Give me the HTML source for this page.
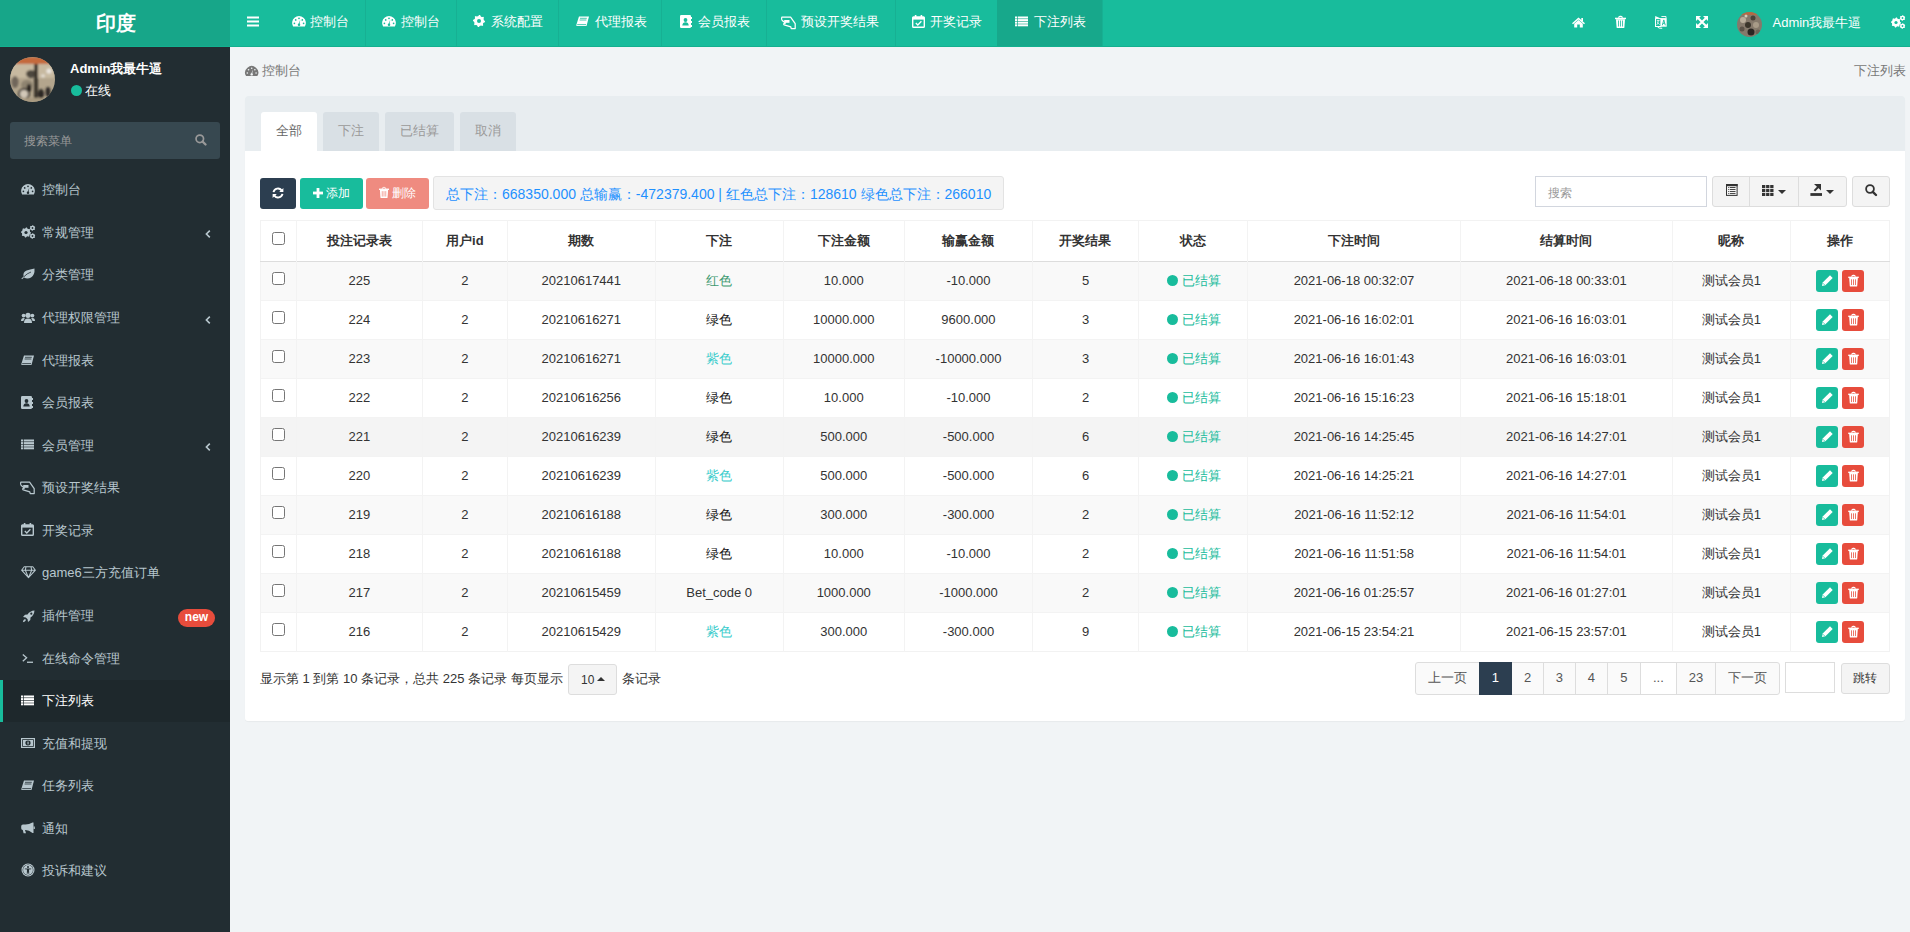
<!DOCTYPE html>
<html><head><meta charset="utf-8"><style>
*{box-sizing:border-box;margin:0;padding:0}
html,body{width:1910px;height:932px;overflow:hidden}
body{font-family:"Liberation Sans",sans-serif;font-size:13px;color:#333;background:#f1f4f6;position:relative}
.tx{position:absolute;white-space:nowrap}
svg{display:block;overflow:visible}
.bx{position:absolute}
</style></head><body>
<div class="bx" style="left:0;top:0;width:230px;height:46px;background:#17a689"></div>
<div class="tx" style="left:96px;top:10.00px;font-size:20px;line-height:26px;color:#fff;font-weight:bold;">印度</div>
<div class="bx" style="left:230px;top:0;width:1680px;height:46px;background:#18bc9c"></div>
<div class="bx" style="left:0;top:46px;width:1910px;height:1px;background:#13b08f"></div>
<div class="bx" style="left:997px;top:0;width:105px;height:46px;background:#17a88b"></div>
<div class="bx" style="left:364.5px;top:0;width:1px;height:46px;background:#17b093"></div>
<div class="bx" style="left:455.5px;top:0;width:1px;height:46px;background:#17b093"></div>
<div class="bx" style="left:558.3px;top:0;width:1px;height:46px;background:#17b093"></div>
<div class="bx" style="left:661.2px;top:0;width:1px;height:46px;background:#17b093"></div>
<div class="bx" style="left:765.5px;top:0;width:1px;height:46px;background:#17b093"></div>
<div class="bx" style="left:894.7px;top:0;width:1px;height:46px;background:#17b093"></div>
<div class="bx" style="left:1101.5px;top:0;width:1px;height:46px;background:#17b093"></div>
<svg style="position:absolute;left:247px;top:16px" width="12" height="11" viewBox="0 0 12 11" fill="#fff" ><rect x="0" y="0.5" width="12" height="2"/><rect x="0" y="4.5" width="12" height="2"/><rect x="0" y="8.5" width="12" height="2"/></svg>
<svg style="position:absolute;left:291.8px;top:16.3px" width="14" height="11" viewBox="0 0 14 11" fill="#fff" ><path d="M1.1 10.6 A6.9 6.9 0 1 1 12.9 10.6 Z"/><circle cx="7" cy="2.3" r="0.85" fill="#18bc9c"/><circle cx="3.7" cy="3.9" r="0.85" fill="#18bc9c"/><circle cx="10.3" cy="3.9" r="0.85" fill="#18bc9c"/><circle cx="2.4" cy="7.3" r="0.85" fill="#18bc9c"/><circle cx="11.6" cy="7.3" r="0.85" fill="#18bc9c"/><path d="M8.3 3.6 L6.5 8.2 L7.5 8.5 Z" fill="#18bc9c"/><circle cx="7" cy="8.8" r="1.25" fill="#18bc9c"/></svg>
<div class="tx" style="left:310.2px;top:12.00px;font-size:13px;line-height:20px;color:#fff;">控制台</div>
<svg style="position:absolute;left:382px;top:16.3px" width="14" height="11" viewBox="0 0 14 11" fill="#fff" ><path d="M1.1 10.6 A6.9 6.9 0 1 1 12.9 10.6 Z"/><circle cx="7" cy="2.3" r="0.85" fill="#18bc9c"/><circle cx="3.7" cy="3.9" r="0.85" fill="#18bc9c"/><circle cx="10.3" cy="3.9" r="0.85" fill="#18bc9c"/><circle cx="2.4" cy="7.3" r="0.85" fill="#18bc9c"/><circle cx="11.6" cy="7.3" r="0.85" fill="#18bc9c"/><path d="M8.3 3.6 L6.5 8.2 L7.5 8.5 Z" fill="#18bc9c"/><circle cx="7" cy="8.8" r="1.25" fill="#18bc9c"/></svg>
<div class="tx" style="left:400.6px;top:12.00px;font-size:13px;line-height:20px;color:#fff;">控制台</div>
<svg style="position:absolute;left:473.3px;top:15px" width="12" height="12" viewBox="0 0 12 12" fill="#fff" ><path d="M6.00,0.00 L7.17,0.12 L7.76,1.75 L8.56,2.18 L10.24,1.76 L10.99,2.67 L10.25,4.24 L10.51,5.10 L12.00,6.00 L11.88,7.17 L10.25,7.76 L9.82,8.56 L10.24,10.24 L9.33,10.99 L7.76,10.25 L6.90,10.51 L6.00,12.00 L4.83,11.88 L4.24,10.25 L3.44,9.82 L1.76,10.24 L1.01,9.33 L1.75,7.76 L1.49,6.90 L0.00,6.00 L0.12,4.83 L1.75,4.24 L2.18,3.44 L1.76,1.76 L2.67,1.01 L4.24,1.75 L5.10,1.49 Z"/><circle cx="6" cy="6" r="4.8"/><circle cx="6" cy="6" r="2" fill="#18bc9c"/></svg>
<div class="tx" style="left:491px;top:12.00px;font-size:13px;line-height:20px;color:#fff;">系统配置</div>
<svg style="position:absolute;left:576px;top:16px" width="13" height="11" viewBox="0 0 13 11" fill="#fff" ><path d="M3 0.5 L13 0.5 L10.5 10 L1 10 Q0 10 0.3 9 Z"/><path d="M4 2.3 L10.8 2.3 M3.6 4 L10.4 4" stroke="#18bc9c" stroke-width="0.8" fill="none"/><path d="M1.2 8.6 L10 8.6" stroke="#18bc9c" stroke-width="0.8" fill="none"/></svg>
<div class="tx" style="left:594.5px;top:12.00px;font-size:13px;line-height:20px;color:#fff;">代理报表</div>
<svg style="position:absolute;left:680px;top:15px" width="12" height="13" viewBox="0 0 12 13" fill="#fff" ><rect x="0" y="0" width="11" height="13" rx="1.2"/><circle cx="5.5" cy="5" r="1.9" fill="#18bc9c"/><path d="M2.3 10.5 Q2.6 7.3 5.5 7.3 Q8.4 7.3 8.7 10.5 Z" fill="#18bc9c"/><rect x="10.5" y="2" width="1.5" height="2"/><rect x="10.5" y="6" width="1.5" height="2"/><rect x="10.5" y="10" width="1.5" height="2"/></svg>
<div class="tx" style="left:697.5px;top:12.00px;font-size:13px;line-height:20px;color:#fff;">会员报表</div>
<svg style="position:absolute;left:781px;top:15.5px" width="15" height="14" viewBox="0 0 15 14" fill="#fff" ><path d="M0.8 1.1 L9.6 1.1 L14.2 7.6 L14.2 12.6 L10.2 12.6 L9.8 10.9 L3.2 8.9 Q2.4 8.5 2.9 7.7 L4.4 7.1 L1.2 4.6 Q0.1 3.6 0.8 1.1 Z" fill="none" stroke="#fff" stroke-width="1.25" stroke-linejoin="round"/><rect x="3.2" y="4" width="5.3" height="2.8"/></svg>
<div class="tx" style="left:801px;top:12.00px;font-size:13px;line-height:20px;color:#fff;">预设开奖结果</div>
<svg style="position:absolute;left:911.7px;top:15px" width="13" height="13" viewBox="0 0 13 13" fill="#fff" ><rect x="0.7" y="2" width="11.6" height="10.3" rx="0.8" fill="none" stroke="#fff" stroke-width="1.4"/><rect x="0.7" y="2" width="11.6" height="2.6"/><rect x="2.8" y="0" width="1.6" height="3"/><rect x="8.6" y="0" width="1.6" height="3"/><path d="M3.8 8 L5.8 10 L9.4 6.2" fill="none" stroke="#fff" stroke-width="1.3"/></svg>
<div class="tx" style="left:929.5px;top:12.00px;font-size:13px;line-height:20px;color:#fff;">开奖记录</div>
<svg style="position:absolute;left:1015px;top:16px" width="13" height="11" viewBox="0 0 13 11" fill="#fff" ><rect x="0" y="0.5" width="2.3" height="2"/><rect x="3" y="0.5" width="10" height="2"/><rect x="0" y="3.1" width="2.3" height="2"/><rect x="3" y="3.1" width="10" height="2"/><rect x="0" y="5.7" width="2.3" height="2"/><rect x="3" y="5.7" width="10" height="2"/><rect x="0" y="8.3" width="2.3" height="2"/><rect x="3" y="8.3" width="10" height="2"/></svg>
<div class="tx" style="left:1034px;top:12.00px;font-size:13px;line-height:20px;color:#fff;">下注列表</div>
<svg style="position:absolute;left:1572px;top:16.5px" width="13" height="11" viewBox="0 0 13 11" fill="#fff" ><path d="M6.5 0.5 L13 6.3 L12 7.3 L6.5 2.5 L1 7.3 L0 6.3 Z"/><path d="M2.2 6.7 L6.5 3 L10.8 6.7 L10.8 10.5 L7.8 10.5 L7.8 7.6 L5.2 7.6 L5.2 10.5 L2.2 10.5 Z"/><rect x="9.3" y="1" width="1.7" height="3"/></svg>
<svg style="position:absolute;left:1615px;top:16.3px" width="11" height="12" viewBox="0 0 11 12" fill="#fff" ><path d="M3.6 1.8 Q3.8 0.4 5 0.4 L6 0.4 Q7.2 0.4 7.4 1.8" fill="none" stroke="#fff" stroke-width="1.1"/><rect x="0" y="1.7" width="11" height="1.5"/><path d="M1 3.2 L10 3.2 L9.4 11.4 Q9.3 12 8.6 12 L2.4 12 Q1.7 12 1.6 11.4 Z"/><rect x="3.1" y="4.5" width="0.8" height="6" fill="#18bc9c"/><rect x="5.1" y="4.5" width="0.8" height="6" fill="#18bc9c"/><rect x="7.1" y="4.5" width="0.8" height="6" fill="#18bc9c"/></svg>
<svg style="position:absolute;left:1655px;top:16px" width="12" height="13" viewBox="0 0 12 13" fill="#fff" ><rect x="0.5" y="2.6" width="5.4" height="7.9" fill="none" stroke="#fff" stroke-width="1"/><path d="M0.2 0 L5.9 2.4 L0.2 2.4 Z"/><rect x="5.9" y="2.1" width="5.8" height="8.6"/><path d="M6.4 0.5 L11 0.5 L11 2.1" fill="none" stroke="#fff" stroke-width="0.9"/><path d="M7.3 9.3 L8.8 3.9 L10.3 9.3 M7.9 7.4 L9.7 7.4" fill="none" stroke="#18bc9c" stroke-width="0.9"/><path d="M1.8 4.6 L4.6 4.6 M3.2 4.6 Q3.2 7.6 1.8 8.8 M2.6 6.4 Q3.6 8 4.6 8.6" fill="none" stroke="#fff" stroke-width="0.8"/><path d="M2.4 10.8 Q3.4 12.6 7.2 12.3" fill="none" stroke="#fff" stroke-width="1"/></svg>
<svg style="position:absolute;left:1696px;top:16px" width="12" height="12" viewBox="0 0 12 12" fill="#fff" ><path d="M0 0 L5 0 L0 5 Z"/><path d="M12 0 L7 0 L12 5 Z"/><path d="M0 12 L5 12 L0 7 Z"/><path d="M12 12 L7 12 L12 7 Z"/><path d="M1.5 1.5 L10.5 10.5 M10.5 1.5 L1.5 10.5" stroke="#fff" stroke-width="2.1" fill="none"/></svg>
<svg style="position:absolute;left:1737px;top:12px" width="25" height="25" viewBox="0 0 25 25"><defs><clipPath id="ch"><circle cx="12.5" cy="12.5" r="12.5"/></clipPath><filter id="fh" x="-10%" y="-10%" width="120%" height="120%"><feGaussianBlur stdDeviation="0.7"/></filter></defs><g clip-path="url(#ch)"><rect width="25" height="25" fill="#85796b"/><g filter="url(#fh)"><rect width="25" height="3" fill="#b26a45"/><circle cx="6" cy="8" r="3" fill="#b9ad9a"/><circle cx="16" cy="6" r="2.5" fill="#4a4238"/><circle cx="11" cy="13" r="3" fill="#3b342c"/><circle cx="19" cy="13" r="3" fill="#a89b88"/><circle cx="5" cy="17" r="2.5" fill="#5c5348"/><circle cx="14" cy="20" r="3.5" fill="#2c2722"/><circle cx="21" cy="20" r="2.5" fill="#6d6356"/><circle cx="9" cy="4" r="1.5" fill="#d6cbb8"/></g></g></svg>
<div class="tx" style="left:1772.5px;top:12.50px;font-size:13px;line-height:20px;color:#fff;">Admin我最牛逼</div>
<svg style="position:absolute;left:1891px;top:15px" width="15" height="14" viewBox="0 0 15 14" fill="#fff" ><path d="M5.00,2.50 L5.98,2.60 L6.49,3.90 L7.17,4.26 L8.54,3.96 L9.16,4.72 L8.60,6.01 L8.83,6.74 L10.00,7.50 L9.90,8.48 L8.60,8.99 L8.24,9.67 L8.54,11.04 L7.78,11.66 L6.49,11.10 L5.76,11.33 L5.00,12.50 L4.02,12.40 L3.51,11.10 L2.83,10.74 L1.46,11.04 L0.84,10.28 L1.40,8.99 L1.17,8.26 L0.00,7.50 L0.10,6.52 L1.40,6.01 L1.76,5.33 L1.46,3.96 L2.22,3.34 L3.51,3.90 L4.24,3.67 Z"/><circle cx="5" cy="7.5" r="4"/><circle cx="5" cy="7.5" r="1.6" fill="#18bc9c"/><path d="M11.50,0.20 L12.22,0.30 L12.55,1.18 L12.98,1.52 L13.92,1.60 L14.20,2.28 L13.60,3.00 L13.53,3.54 L13.92,4.40 L13.48,4.98 L12.55,4.82 L12.04,5.03 L11.50,5.80 L10.78,5.70 L10.45,4.82 L10.02,4.48 L9.08,4.40 L8.80,3.72 L9.40,3.00 L9.47,2.46 L9.08,1.60 L9.52,1.02 L10.45,1.18 L10.96,0.97 Z"/><circle cx="11.5" cy="3" r="2.2"/><circle cx="11.5" cy="3" r="0.9" fill="#18bc9c"/><path d="M11.50,8.20 L12.22,8.30 L12.55,9.18 L12.98,9.52 L13.92,9.60 L14.20,10.28 L13.60,11.00 L13.53,11.54 L13.92,12.40 L13.48,12.98 L12.55,12.82 L12.04,13.03 L11.50,13.80 L10.78,13.70 L10.45,12.82 L10.02,12.48 L9.08,12.40 L8.80,11.72 L9.40,11.00 L9.47,10.46 L9.08,9.60 L9.52,9.02 L10.45,9.18 L10.96,8.97 Z"/><circle cx="11.5" cy="11" r="2.2"/><circle cx="11.5" cy="11" r="0.9" fill="#18bc9c"/></svg>
<div class="bx" style="left:0;top:47px;width:230px;height:885px;background:#222d32"></div>
<svg style="position:absolute;left:10px;top:57px" width="45" height="45" viewBox="0 0 45 45"><defs><clipPath id="c2"><circle cx="22.5" cy="22.5" r="22.5"/></clipPath><filter id="f2" x="-10%" y="-10%" width="120%" height="120%"><feGaussianBlur stdDeviation="1.3"/></filter></defs><g clip-path="url(#c2)"><rect width="45" height="45" fill="#b3a58d"/><g filter="url(#f2)"><rect width="45" height="7" fill="#c46a3e"/><rect x="0" y="7" width="45" height="14" fill="#c7b9a0"/><ellipse cx="5" cy="25" rx="3.5" ry="6" fill="#6f665a"/><ellipse cx="21" cy="17" rx="5" ry="4" fill="#4d463c"/><rect x="24" y="7" width="4" height="36" fill="#3e372e"/><ellipse cx="17" cy="28" rx="6" ry="5" fill="#8e8370"/><circle cx="14" cy="37" r="5" fill="#d2c8b8" stroke="#3d3731" stroke-width="2"/><ellipse cx="19" cy="31" rx="2.2" ry="4" fill="#25211d"/><ellipse cx="31" cy="37" rx="3" ry="5" fill="#2a2622"/><ellipse cx="38" cy="35" rx="2.5" ry="5" fill="#2e2a25"/><circle cx="39" cy="14" r="2.6" fill="#ebe6df"/><circle cx="33" cy="19" r="1.8" fill="#e6e0d6"/><rect x="0" y="41" width="45" height="4" fill="#a89a80"/></g></g></svg>
<div class="tx" style="left:70px;top:59.20px;font-size:13px;line-height:20px;color:#fff;font-weight:bold;">Admin我最牛逼</div>
<svg style="position:absolute;left:70.5px;top:84.8px" width="11" height="11" viewBox="0 0 11 11" fill="#18bc9c" ><circle cx="5.5" cy="5.5" r="5.5"/></svg>
<div class="tx" style="left:85px;top:81.00px;font-size:13px;line-height:20px;color:#fff;">在线</div>
<div class="bx" style="left:10px;top:122px;width:210px;height:37px;background:#374850;border-radius:3px"></div>
<div class="tx" style="left:24px;top:131.30px;font-size:12px;line-height:20px;color:#999;">搜索菜单</div>
<svg style="position:absolute;left:194.5px;top:133.6px" width="11.5" height="11.5" viewBox="0 0 12 12" fill="#999" ><circle cx="5" cy="5" r="3.9" fill="none" stroke="#999" stroke-width="1.8"/><path d="M7.8 7.8 L11 11" stroke="#999" stroke-width="2.4" stroke-linecap="round"/></svg>
<svg style="position:absolute;left:21px;top:184.15px" width="14" height="11" viewBox="0 0 14 11" fill="#b8c7ce" ><path d="M1.1 10.6 A6.9 6.9 0 1 1 12.9 10.6 Z"/><circle cx="7" cy="2.3" r="0.85" fill="#222d32"/><circle cx="3.7" cy="3.9" r="0.85" fill="#222d32"/><circle cx="10.3" cy="3.9" r="0.85" fill="#222d32"/><circle cx="2.4" cy="7.3" r="0.85" fill="#222d32"/><circle cx="11.6" cy="7.3" r="0.85" fill="#222d32"/><path d="M8.3 3.6 L6.5 8.2 L7.5 8.5 Z" fill="#222d32"/><circle cx="7" cy="8.8" r="1.25" fill="#222d32"/></svg>
<div class="tx" style="left:42px;top:180.35px;font-size:13px;line-height:20px;color:#b8c7ce;">控制台</div>
<svg style="position:absolute;left:21px;top:224.91px" width="15" height="14" viewBox="0 0 15 14" fill="#b8c7ce" ><path d="M5.00,2.50 L5.98,2.60 L6.49,3.90 L7.17,4.26 L8.54,3.96 L9.16,4.72 L8.60,6.01 L8.83,6.74 L10.00,7.50 L9.90,8.48 L8.60,8.99 L8.24,9.67 L8.54,11.04 L7.78,11.66 L6.49,11.10 L5.76,11.33 L5.00,12.50 L4.02,12.40 L3.51,11.10 L2.83,10.74 L1.46,11.04 L0.84,10.28 L1.40,8.99 L1.17,8.26 L0.00,7.50 L0.10,6.52 L1.40,6.01 L1.76,5.33 L1.46,3.96 L2.22,3.34 L3.51,3.90 L4.24,3.67 Z"/><circle cx="5" cy="7.5" r="4"/><circle cx="5" cy="7.5" r="1.6" fill="#222d32"/><path d="M11.50,0.20 L12.22,0.30 L12.55,1.18 L12.98,1.52 L13.92,1.60 L14.20,2.28 L13.60,3.00 L13.53,3.54 L13.92,4.40 L13.48,4.98 L12.55,4.82 L12.04,5.03 L11.50,5.80 L10.78,5.70 L10.45,4.82 L10.02,4.48 L9.08,4.40 L8.80,3.72 L9.40,3.00 L9.47,2.46 L9.08,1.60 L9.52,1.02 L10.45,1.18 L10.96,0.97 Z"/><circle cx="11.5" cy="3" r="2.2"/><circle cx="11.5" cy="3" r="0.9" fill="#222d32"/><path d="M11.50,8.20 L12.22,8.30 L12.55,9.18 L12.98,9.52 L13.92,9.60 L14.20,10.28 L13.60,11.00 L13.53,11.54 L13.92,12.40 L13.48,12.98 L12.55,12.82 L12.04,13.03 L11.50,13.80 L10.78,13.70 L10.45,12.82 L10.02,12.48 L9.08,12.40 L8.80,11.72 L9.40,11.00 L9.47,10.46 L9.08,9.60 L9.52,9.02 L10.45,9.18 L10.96,8.97 Z"/><circle cx="11.5" cy="11" r="2.2"/><circle cx="11.5" cy="11" r="0.9" fill="#222d32"/></svg>
<div class="tx" style="left:42px;top:222.91px;font-size:13px;line-height:20px;color:#b8c7ce;">常规管理</div>
<svg style="position:absolute;left:204.5px;top:230.41px" width="6" height="8" viewBox="0 0 6 8" fill="#b8c7ce" ><path d="M4.8 0.6 L1.4 4 L4.8 7.4" fill="none" stroke="#b8c7ce" stroke-width="1.6"/></svg>
<svg style="position:absolute;left:21px;top:268.47px" width="14" height="12" viewBox="0 0 14 12" fill="#b8c7ce" ><path d="M13.5 0.5 Q14 7 10 9.5 Q6.5 11.5 3 9.6 Q1.8 10.6 1 11.2 L0.4 10.6 Q1.6 9.4 2.6 8.6 Q1.6 4.2 5.6 2.6 Q8.8 1.4 13.5 0.5 Z"/><path d="M2.6 9 Q6 5.4 10 4" fill="none" stroke="#222d32" stroke-width="0.8"/></svg>
<div class="tx" style="left:42px;top:265.47px;font-size:13px;line-height:20px;color:#b8c7ce;">分类管理</div>
<svg style="position:absolute;left:21px;top:311.53px" width="14" height="11" viewBox="0 0 14 11" fill="#b8c7ce" ><circle cx="7" cy="3.3" r="2.6"/><path d="M3 11 Q3 6.6 7 6.6 Q11 6.6 11 11 Z"/><circle cx="2.6" cy="3.6" r="1.9"/><path d="M0 9 Q0 6 2.6 6 Q3.5 6 4 6.4 Q2.6 7.6 2.4 9 Z"/><circle cx="11.4" cy="3.6" r="1.9"/><path d="M14 9 Q14 6 11.4 6 Q10.5 6 10 6.4 Q11.4 7.6 11.6 9 Z"/></svg>
<div class="tx" style="left:42px;top:308.03px;font-size:13px;line-height:20px;color:#b8c7ce;">代理权限管理</div>
<svg style="position:absolute;left:204.5px;top:315.53px" width="6" height="8" viewBox="0 0 6 8" fill="#b8c7ce" ><path d="M4.8 0.6 L1.4 4 L4.8 7.4" fill="none" stroke="#b8c7ce" stroke-width="1.6"/></svg>
<svg style="position:absolute;left:21px;top:354.59000000000003px" width="13" height="11" viewBox="0 0 13 11" fill="#b8c7ce" ><path d="M3 0.5 L13 0.5 L10.5 10 L1 10 Q0 10 0.3 9 Z"/><path d="M4 2.3 L10.8 2.3 M3.6 4 L10.4 4" stroke="#222d32" stroke-width="0.8" fill="none"/><path d="M1.2 8.6 L10 8.6" stroke="#222d32" stroke-width="0.8" fill="none"/></svg>
<div class="tx" style="left:42px;top:350.59px;font-size:13px;line-height:20px;color:#b8c7ce;">代理报表</div>
<svg style="position:absolute;left:21px;top:395.65px" width="12" height="13" viewBox="0 0 12 13" fill="#b8c7ce" ><rect x="0" y="0" width="11" height="13" rx="1.2"/><circle cx="5.5" cy="5" r="1.9" fill="#222d32"/><path d="M2.3 10.5 Q2.6 7.3 5.5 7.3 Q8.4 7.3 8.7 10.5 Z" fill="#222d32"/><rect x="10.5" y="2" width="1.5" height="2"/><rect x="10.5" y="6" width="1.5" height="2"/><rect x="10.5" y="10" width="1.5" height="2"/></svg>
<div class="tx" style="left:42px;top:393.15px;font-size:13px;line-height:20px;color:#b8c7ce;">会员报表</div>
<svg style="position:absolute;left:21px;top:439.21000000000004px" width="13" height="11" viewBox="0 0 13 11" fill="#b8c7ce" ><rect x="0" y="0.5" width="2.3" height="2"/><rect x="3" y="0.5" width="10" height="2"/><rect x="0" y="3.1" width="2.3" height="2"/><rect x="3" y="3.1" width="10" height="2"/><rect x="0" y="5.7" width="2.3" height="2"/><rect x="3" y="5.7" width="10" height="2"/><rect x="0" y="8.3" width="2.3" height="2"/><rect x="3" y="8.3" width="10" height="2"/></svg>
<div class="tx" style="left:42px;top:435.71px;font-size:13px;line-height:20px;color:#b8c7ce;">会员管理</div>
<svg style="position:absolute;left:204.5px;top:443.21000000000004px" width="6" height="8" viewBox="0 0 6 8" fill="#b8c7ce" ><path d="M4.8 0.6 L1.4 4 L4.8 7.4" fill="none" stroke="#b8c7ce" stroke-width="1.6"/></svg>
<svg style="position:absolute;left:20px;top:480.77px" width="15" height="14" viewBox="0 0 15 14" fill="#b8c7ce" ><path d="M0.8 1.1 L9.6 1.1 L14.2 7.6 L14.2 12.6 L10.2 12.6 L9.8 10.9 L3.2 8.9 Q2.4 8.5 2.9 7.7 L4.4 7.1 L1.2 4.6 Q0.1 3.6 0.8 1.1 Z" fill="none" stroke="#b8c7ce" stroke-width="1.25" stroke-linejoin="round"/><rect x="3.2" y="4" width="5.3" height="2.8"/></svg>
<div class="tx" style="left:42px;top:478.27px;font-size:13px;line-height:20px;color:#b8c7ce;">预设开奖结果</div>
<svg style="position:absolute;left:21px;top:523.33px" width="13" height="13" viewBox="0 0 13 13" fill="#b8c7ce" ><rect x="0.7" y="2" width="11.6" height="10.3" rx="0.8" fill="none" stroke="#b8c7ce" stroke-width="1.4"/><rect x="0.7" y="2" width="11.6" height="2.6"/><rect x="2.8" y="0" width="1.6" height="3"/><rect x="8.6" y="0" width="1.6" height="3"/><path d="M3.8 8 L5.8 10 L9.4 6.2" fill="none" stroke="#b8c7ce" stroke-width="1.3"/></svg>
<div class="tx" style="left:42px;top:520.83px;font-size:13px;line-height:20px;color:#b8c7ce;">开奖记录</div>
<svg style="position:absolute;left:20.5px;top:566.39px" width="15" height="12" viewBox="0 0 15 12" fill="#b8c7ce" ><path d="M3.2 0.8 L11.8 0.8 L14.4 4.2 L7.5 11.6 L0.6 4.2 Z M0.6 4.2 L14.4 4.2 M5 0.8 L4.3 4.2 L7.5 11.6 L10.7 4.2 L10 0.8" fill="none" stroke="#b8c7ce" stroke-width="1.05" stroke-linejoin="round"/></svg>
<div class="tx" style="left:42px;top:563.39px;font-size:13px;line-height:20px;color:#b8c7ce;">game6三方充值订单</div>
<svg style="position:absolute;left:22px;top:609.95px" width="13" height="13" viewBox="0 0 13 13" fill="#b8c7ce" ><path d="M12.5 0.5 Q8 0.8 5.5 4.5 L3 4.7 L1 7 L3.8 7.4 L5.6 9.2 L6 12 L8.3 10 L8.5 7.5 Q12.2 5 12.5 0.5 Z"/><circle cx="9.3" cy="3.7" r="1.1" fill="#222d32"/><path d="M3 9 Q1.2 9.6 0.8 12.2 Q3.4 11.8 4 10 Z"/></svg>
<div class="tx" style="left:42px;top:605.95px;font-size:13px;line-height:20px;color:#b8c7ce;">插件管理</div>
<div class="bx" style="left:178px;top:609px;width:37px;height:18px;background:#e74c3c;border-radius:9px"></div>
<div class="tx" style="left:178px;top:607.00px;font-size:12px;line-height:20px;color:#fff;font-weight:bold;text-align:center;width:37px;">new</div>
<svg style="position:absolute;left:22px;top:652.51px" width="12" height="11" viewBox="0 0 12 11" fill="#b8c7ce" ><path d="M0.8 1.5 L4.6 4.8 L0.8 8.2" fill="none" stroke="#b8c7ce" stroke-width="1.3"/><rect x="5" y="8.6" width="6" height="1.3"/></svg>
<div class="tx" style="left:42px;top:648.51px;font-size:13px;line-height:20px;color:#b8c7ce;">在线命令管理</div>
<div class="bx" style="left:0;top:680px;width:230px;height:42px;background:#1e282c"></div>
<div class="bx" style="left:0;top:680px;width:3px;height:42px;background:#18bc9c"></div>
<svg style="position:absolute;left:21px;top:694.57px" width="13" height="11" viewBox="0 0 13 11" fill="#fff" ><rect x="0" y="0.5" width="2.3" height="2"/><rect x="3" y="0.5" width="10" height="2"/><rect x="0" y="3.1" width="2.3" height="2"/><rect x="3" y="3.1" width="10" height="2"/><rect x="0" y="5.7" width="2.3" height="2"/><rect x="3" y="5.7" width="10" height="2"/><rect x="0" y="8.3" width="2.3" height="2"/><rect x="3" y="8.3" width="10" height="2"/></svg>
<div class="tx" style="left:42px;top:691.07px;font-size:13px;line-height:20px;color:#fff;">下注列表</div>
<svg style="position:absolute;left:21px;top:737.63px" width="14" height="10" viewBox="0 0 14 10" fill="#b8c7ce" ><rect x="0.6" y="0.6" width="12.8" height="8.8" fill="none" stroke="#b8c7ce" stroke-width="1.2"/><rect x="2" y="2" width="10" height="6" /><ellipse cx="7" cy="5" rx="2.6" ry="2.4" fill="#222d32"/><rect x="6.5" y="3.6" width="1.1" height="2.8"/></svg>
<div class="tx" style="left:42px;top:733.63px;font-size:13px;line-height:20px;color:#b8c7ce;">充值和提现</div>
<svg style="position:absolute;left:21px;top:780.19px" width="13" height="11" viewBox="0 0 13 11" fill="#b8c7ce" ><path d="M3 0.5 L13 0.5 L10.5 10 L1 10 Q0 10 0.3 9 Z"/><path d="M4 2.3 L10.8 2.3 M3.6 4 L10.4 4" stroke="#222d32" stroke-width="0.8" fill="none"/><path d="M1.2 8.6 L10 8.6" stroke="#222d32" stroke-width="0.8" fill="none"/></svg>
<div class="tx" style="left:42px;top:776.19px;font-size:13px;line-height:20px;color:#b8c7ce;">任务列表</div>
<svg style="position:absolute;left:21px;top:821.7500000000001px" width="14" height="12" viewBox="0 0 14 12" fill="#b8c7ce" ><path d="M11.5 0.5 L12.5 0.5 L12.5 11 L11.5 11 Q8 8 4.5 8 L4 8 L5 11.3 L2.6 11.3 L1.8 8 Q0.2 7.8 0.2 6.2 L0.2 4.3 Q0.2 2.6 2 2.6 L4.5 2.6 Q8 2.6 11.5 0.5 Z"/><rect x="12.6" y="4.5" width="1.2" height="2.5"/></svg>
<div class="tx" style="left:42px;top:818.75px;font-size:13px;line-height:20px;color:#b8c7ce;">通知</div>
<svg style="position:absolute;left:21px;top:863.3100000000001px" width="14" height="14" viewBox="0 0 14 14" fill="#b8c7ce" ><circle cx="7" cy="7" r="6.5"/><circle cx="7" cy="7" r="5.4" fill="#222d32"/><circle cx="7" cy="7" r="4.9"/><circle cx="7" cy="3.9" r="1" fill="#222d32"/><path d="M3.8 5.4 L10.2 5.4 L10.2 6.2 L8 6.5 L8.2 10.8 L7.4 10.8 L7 8.4 L6.6 10.8 L5.8 10.8 L6 6.5 L3.8 6.2 Z" fill="#222d32"/></svg>
<div class="tx" style="left:42px;top:861.31px;font-size:13px;line-height:20px;color:#b8c7ce;">投诉和建议</div>
<svg style="position:absolute;left:244.6px;top:65.6px" width="13.4" height="10.5" viewBox="0 0 14 11" fill="#777" ><path d="M1.1 10.6 A6.9 6.9 0 1 1 12.9 10.6 Z"/><circle cx="7" cy="2.3" r="0.85" fill="#f1f4f6"/><circle cx="3.7" cy="3.9" r="0.85" fill="#f1f4f6"/><circle cx="10.3" cy="3.9" r="0.85" fill="#f1f4f6"/><circle cx="2.4" cy="7.3" r="0.85" fill="#f1f4f6"/><circle cx="11.6" cy="7.3" r="0.85" fill="#f1f4f6"/><path d="M8.3 3.6 L6.5 8.2 L7.5 8.5 Z" fill="#f1f4f6"/><circle cx="7" cy="8.8" r="1.25" fill="#f1f4f6"/></svg>
<div class="tx" style="left:261.6px;top:61.00px;font-size:13px;line-height:20px;color:#777;">控制台</div>
<div class="tx" style="left:1854px;top:60.50px;font-size:13px;line-height:20px;color:#777;">下注列表</div>
<div class="bx" style="left:245px;top:96px;width:1660px;height:625px;background:#fff;border-radius:3px;box-shadow:0 1px 1px rgba(0,0,0,.04)"></div>
<div class="bx" style="left:245px;top:96px;width:1660px;height:55px;background:#e8edf0;border-radius:3px 3px 0 0"></div>
<div class="bx" style="left:260.8px;top:112px;width:56px;height:39px;background:#fff;border-radius:3px 3px 0 0"></div>
<div class="tx" style="left:260.8px;top:121.00px;font-size:13px;line-height:20px;color:#666;text-align:center;width:56px;">全部</div>
<div class="bx" style="left:322.9px;top:112px;width:56px;height:39px;background:#d9e0e5;border-radius:3px 3px 0 0"></div>
<div class="tx" style="left:322.9px;top:121.00px;font-size:13px;line-height:20px;color:#999;text-align:center;width:56px;">下注</div>
<div class="bx" style="left:384.9px;top:112px;width:69px;height:39px;background:#d9e0e5;border-radius:3px 3px 0 0"></div>
<div class="tx" style="left:384.9px;top:121.00px;font-size:13px;line-height:20px;color:#999;text-align:center;width:69px;">已结算</div>
<div class="bx" style="left:459.8px;top:112px;width:56px;height:39px;background:#d9e0e5;border-radius:3px 3px 0 0"></div>
<div class="tx" style="left:459.8px;top:121.00px;font-size:13px;line-height:20px;color:#999;text-align:center;width:56px;">取消</div>
<div class="bx" style="left:260px;top:178px;width:36px;height:31px;background:#2c3e50;border-radius:3px"></div>
<svg style="position:absolute;left:272px;top:187px" width="12" height="12" viewBox="0 0 12 12" fill="#fff" ><path d="M1.5 5.1 A4.5 4.5 0 0 1 9.6 3.4" fill="none" stroke="#fff" stroke-width="1.9"/><path d="M11.4 0.9 L11.4 5.1 L7.2 5.1 Z"/><path d="M10.5 6.9 A4.5 4.5 0 0 1 2.4 8.6" fill="none" stroke="#fff" stroke-width="1.9"/><path d="M0.6 11.1 L0.6 6.9 L4.8 6.9 Z"/></svg>
<div class="bx" style="left:300px;top:178px;width:63px;height:31px;background:#18bc9c;border-radius:3px"></div>
<svg style="position:absolute;left:312.8px;top:187.5px" width="10" height="10" viewBox="0 0 10 10" fill="#fff" ><rect x="3.6" y="0" width="2.8" height="10"/><rect x="0" y="3.6" width="10" height="2.8"/></svg>
<div class="tx" style="left:325.5px;top:182.50px;font-size:12px;line-height:20px;color:#fff;">添加</div>
<div class="bx" style="left:366px;top:178px;width:63px;height:31px;background:#ef8b80;border-radius:3px"></div>
<svg style="position:absolute;left:379px;top:187px" width="10" height="11" viewBox="0 0 11 12" fill="#fff" ><path d="M3.6 1.8 Q3.8 0.4 5 0.4 L6 0.4 Q7.2 0.4 7.4 1.8" fill="none" stroke="#fff" stroke-width="1.1"/><rect x="0" y="1.7" width="11" height="1.5"/><path d="M1 3.2 L10 3.2 L9.4 11.4 Q9.3 12 8.6 12 L2.4 12 Q1.7 12 1.6 11.4 Z"/><rect x="3.1" y="4.5" width="0.8" height="6" fill="#ef8b80"/><rect x="5.1" y="4.5" width="0.8" height="6" fill="#ef8b80"/><rect x="7.1" y="4.5" width="0.8" height="6" fill="#ef8b80"/></svg>
<div class="tx" style="left:392px;top:182.50px;font-size:12px;line-height:20px;color:#fff;">删除</div>
<div class="bx" style="left:433px;top:176px;width:571px;height:34px;background:#f4f4f4;border:1px solid #e3e3e3;border-radius:3px"></div>
<div class="tx" style="left:446px;top:183.90px;font-size:14px;line-height:20px;color:#1e90ff;">总下注：668350.000 总输赢：-472379.400 | 红色总下注：128610 绿色总下注：266010</div>
<div class="bx" style="left:1535px;top:176px;width:172px;height:31px;background:#fff;border:1px solid #d2d6de"></div>
<div class="tx" style="left:1548px;top:182.50px;font-size:12px;line-height:20px;color:#999;">搜索</div>
<div class="bx" style="left:1712px;top:176px;width:135px;height:31px;background:#f4f4f4;border:1px solid #ddd;border-radius:3px"></div>
<div class="bx" style="left:1749px;top:176px;width:1px;height:31px;background:#ddd"></div>
<div class="bx" style="left:1798px;top:176px;width:1px;height:31px;background:#ddd"></div>
<svg style="position:absolute;left:1726px;top:184px" width="12" height="12" viewBox="0 0 12 12" fill="#333" ><rect x="0.5" y="0.5" width="10.6" height="10.9" fill="none" stroke="#333" stroke-width="1"/><rect x="0" y="0" width="11.6" height="2.2"/><rect x="2.2" y="3.00" width="1" height="0.9"/><rect x="3.9" y="3.00" width="5.6" height="0.9"/><rect x="2.2" y="5.05" width="1" height="0.9"/><rect x="3.9" y="5.05" width="5.6" height="0.9"/><rect x="2.2" y="7.10" width="1" height="0.9"/><rect x="3.9" y="7.10" width="5.6" height="0.9"/><rect x="2.2" y="9.15" width="1" height="0.9"/><rect x="3.9" y="9.15" width="5.6" height="0.9"/></svg>
<svg style="position:absolute;left:1762px;top:185px" width="12" height="11" viewBox="0 0 12 11" fill="#333" ><rect x="0.00" y="0.00" width="3.3" height="3.1"/><rect x="4.10" y="0.00" width="3.3" height="3.1"/><rect x="8.20" y="0.00" width="3.3" height="3.1"/><rect x="0.00" y="3.95" width="3.3" height="3.1"/><rect x="4.10" y="3.95" width="3.3" height="3.1"/><rect x="8.20" y="3.95" width="3.3" height="3.1"/><rect x="0.00" y="7.90" width="3.3" height="3.1"/><rect x="4.10" y="7.90" width="3.3" height="3.1"/><rect x="8.20" y="7.90" width="3.3" height="3.1"/></svg>
<svg style="position:absolute;left:1778px;top:190px" width="8" height="4" viewBox="0 0 8 4" fill="#333" ><path d="M0 0 L8 0 L4 4 Z"/></svg>
<svg style="position:absolute;left:1810px;top:183px" width="13" height="13" viewBox="0 0 13 13" fill="#333" ><rect x="0.4" y="10.1" width="11.6" height="2.8"/><path d="M4 1 L11 1 L11 7.6 Z"/><path d="M8.6 3.5 L4.4 7.9" stroke="#333" stroke-width="2" fill="none"/></svg>
<svg style="position:absolute;left:1826px;top:189.5px" width="8" height="4" viewBox="0 0 8 4" fill="#333" ><path d="M0 0 L8 0 L4 4 Z"/></svg>
<div class="bx" style="left:1852px;top:176px;width:38px;height:31px;background:#f4f4f4;border:1px solid #ddd;border-radius:3px"></div>
<svg style="position:absolute;left:1865px;top:183.5px" width="12" height="12" viewBox="0 0 12 12" fill="#333" ><circle cx="5" cy="5" r="3.9" fill="none" stroke="#333" stroke-width="1.8"/><path d="M7.8 7.8 L11 11" stroke="#333" stroke-width="2.4" stroke-linecap="round"/></svg>
<div class="bx" style="left:260px;top:262px;width:1630px;height:39px;background:#f9f9f9"></div>
<div class="bx" style="left:260px;top:300px;width:1630px;height:1px;background:#f3f3f3"></div>
<div class="bx" style="left:260px;top:340px;width:1630px;height:39px;background:#f9f9f9"></div>
<div class="bx" style="left:260px;top:339px;width:1630px;height:1px;background:#f3f3f3"></div>
<div class="bx" style="left:260px;top:378px;width:1630px;height:1px;background:#f3f3f3"></div>
<div class="bx" style="left:260px;top:418px;width:1630px;height:39px;background:#f4f4f4"></div>
<div class="bx" style="left:260px;top:417px;width:1630px;height:1px;background:#f3f3f3"></div>
<div class="bx" style="left:260px;top:456px;width:1630px;height:1px;background:#f3f3f3"></div>
<div class="bx" style="left:260px;top:496px;width:1630px;height:39px;background:#f9f9f9"></div>
<div class="bx" style="left:260px;top:495px;width:1630px;height:1px;background:#f3f3f3"></div>
<div class="bx" style="left:260px;top:534px;width:1630px;height:1px;background:#f3f3f3"></div>
<div class="bx" style="left:260px;top:574px;width:1630px;height:39px;background:#f9f9f9"></div>
<div class="bx" style="left:260px;top:573px;width:1630px;height:1px;background:#f3f3f3"></div>
<div class="bx" style="left:260px;top:612px;width:1630px;height:1px;background:#f3f3f3"></div>
<div class="bx" style="left:260px;top:220px;width:1630px;height:432px;border:1px solid #f2f2f2"></div>
<div class="bx" style="left:260px;top:261px;width:1630px;height:1px;background:#ddd"></div>
<div class="bx" style="left:295.8px;top:220px;width:1px;height:432px;background:#f3f3f3"></div>
<div class="bx" style="left:421.9px;top:220px;width:1px;height:432px;background:#f3f3f3"></div>
<div class="bx" style="left:506.8px;top:220px;width:1px;height:432px;background:#f3f3f3"></div>
<div class="bx" style="left:654.8px;top:220px;width:1px;height:432px;background:#f3f3f3"></div>
<div class="bx" style="left:782.6px;top:220px;width:1px;height:432px;background:#f3f3f3"></div>
<div class="bx" style="left:903.9px;top:220px;width:1px;height:432px;background:#f3f3f3"></div>
<div class="bx" style="left:1032.1px;top:220px;width:1px;height:432px;background:#f3f3f3"></div>
<div class="bx" style="left:1137.9px;top:220px;width:1px;height:432px;background:#f3f3f3"></div>
<div class="bx" style="left:1247.0px;top:220px;width:1px;height:432px;background:#f3f3f3"></div>
<div class="bx" style="left:1460.0px;top:220px;width:1px;height:432px;background:#f3f3f3"></div>
<div class="bx" style="left:1671.8px;top:220px;width:1px;height:432px;background:#f3f3f3"></div>
<div class="bx" style="left:1789.8px;top:220px;width:1px;height:432px;background:#f3f3f3"></div>
<div class="bx" style="left:272px;top:232px;width:13px;height:13px;border:1px solid #767676;border-radius:2.5px;background:#fff"></div>
<div class="tx" style="left:296.3px;top:231.30px;font-size:13px;line-height:20px;color:#333;font-weight:bold;text-align:center;width:126.09999999999997px;">投注记录表</div>
<div class="tx" style="left:422.4px;top:231.30px;font-size:13px;line-height:20px;color:#333;font-weight:bold;text-align:center;width:84.90000000000003px;">用户id</div>
<div class="tx" style="left:507.3px;top:231.30px;font-size:13px;line-height:20px;color:#333;font-weight:bold;text-align:center;width:147.99999999999994px;">期数</div>
<div class="tx" style="left:655.3px;top:231.30px;font-size:13px;line-height:20px;color:#333;font-weight:bold;text-align:center;width:127.80000000000007px;">下注</div>
<div class="tx" style="left:783.1px;top:231.30px;font-size:13px;line-height:20px;color:#333;font-weight:bold;text-align:center;width:121.29999999999995px;">下注金额</div>
<div class="tx" style="left:904.4px;top:231.30px;font-size:13px;line-height:20px;color:#333;font-weight:bold;text-align:center;width:128.19999999999993px;">输赢金额</div>
<div class="tx" style="left:1032.6px;top:231.30px;font-size:13px;line-height:20px;color:#333;font-weight:bold;text-align:center;width:105.80000000000018px;">开奖结果</div>
<div class="tx" style="left:1138.4px;top:231.30px;font-size:13px;line-height:20px;color:#333;font-weight:bold;text-align:center;width:109.09999999999991px;">状态</div>
<div class="tx" style="left:1247.5px;top:231.30px;font-size:13px;line-height:20px;color:#333;font-weight:bold;text-align:center;width:213.0px;">下注时间</div>
<div class="tx" style="left:1460.5px;top:231.30px;font-size:13px;line-height:20px;color:#333;font-weight:bold;text-align:center;width:211.79999999999995px;">结算时间</div>
<div class="tx" style="left:1672.3px;top:231.30px;font-size:13px;line-height:20px;color:#333;font-weight:bold;text-align:center;width:118.0px;">昵称</div>
<div class="tx" style="left:1790.3px;top:231.30px;font-size:13px;line-height:20px;color:#333;font-weight:bold;text-align:center;width:99.70000000000005px;">操作</div>
<div class="bx" style="left:272px;top:272px;width:13px;height:13px;border:1px solid #767676;border-radius:2.5px;background:#fff"></div>
<div class="tx" style="left:296.3px;top:271.00px;font-size:13px;line-height:20px;color:#333;text-align:center;width:126.09999999999997px;">225</div>
<div class="tx" style="left:422.4px;top:271.00px;font-size:13px;line-height:20px;color:#333;text-align:center;width:84.90000000000003px;">2</div>
<div class="tx" style="left:507.3px;top:271.00px;font-size:13px;line-height:20px;color:#333;text-align:center;width:147.99999999999994px;">20210617441</div>
<div class="tx" style="left:655.3px;top:271.00px;font-size:13px;line-height:20px;color:#3d9970;text-align:center;width:127.80000000000007px;">红色</div>
<div class="tx" style="left:783.1px;top:271.00px;font-size:13px;line-height:20px;color:#333;text-align:center;width:121.29999999999995px;">10.000</div>
<div class="tx" style="left:904.4px;top:271.00px;font-size:13px;line-height:20px;color:#333;text-align:center;width:128.19999999999993px;">-10.000</div>
<div class="tx" style="left:1032.6px;top:271.00px;font-size:13px;line-height:20px;color:#333;text-align:center;width:105.80000000000018px;">5</div>
<div class="tx" style="left:1247.5px;top:271.00px;font-size:13px;line-height:20px;color:#333;text-align:center;width:213.0px;">2021-06-18 00:32:07</div>
<div class="tx" style="left:1460.5px;top:271.00px;font-size:13px;line-height:20px;color:#333;text-align:center;width:211.79999999999995px;">2021-06-18 00:33:01</div>
<div class="tx" style="left:1672.3px;top:271.00px;font-size:13px;line-height:20px;color:#333;text-align:center;width:118.0px;">测试会员1</div>
<svg style="position:absolute;left:1166.5px;top:274.7px" width="11" height="11" viewBox="0 0 11 11" fill="#18bc9c" ><circle cx="5.5" cy="5.5" r="5.5"/></svg>
<div class="tx" style="left:1182px;top:271.00px;font-size:13px;line-height:20px;color:#18bc9c;">已结算</div>
<div class="bx" style="left:1816px;top:270px;width:22px;height:22px;background:#18bc9c;border-radius:3px"></div>
<svg style="position:absolute;left:1822px;top:275.2px" width="11" height="11" viewBox="0 0 11 11" fill="#fff" ><path d="M0 11 L0.7 7.6 L8 0.3 L10.7 3 L3.4 10.3 Z"/><path d="M0.9 8.2 L2.8 10.1" stroke="#18bc9c" stroke-width="0.7" fill="none"/></svg>
<div class="bx" style="left:1842px;top:270px;width:22px;height:22px;background:#e74c3c;border-radius:3px"></div>
<svg style="position:absolute;left:1847.5px;top:274.8px" width="11" height="11.5" viewBox="0 0 11 12" fill="#fff" ><path d="M3.6 1.8 Q3.8 0.4 5 0.4 L6 0.4 Q7.2 0.4 7.4 1.8" fill="none" stroke="#fff" stroke-width="1.1"/><rect x="0" y="1.7" width="11" height="1.5"/><path d="M1 3.2 L10 3.2 L9.4 11.4 Q9.3 12 8.6 12 L2.4 12 Q1.7 12 1.6 11.4 Z"/><rect x="3.1" y="4.5" width="0.8" height="6" fill="#e74c3c"/><rect x="5.1" y="4.5" width="0.8" height="6" fill="#e74c3c"/><rect x="7.1" y="4.5" width="0.8" height="6" fill="#e74c3c"/></svg>
<div class="bx" style="left:272px;top:311px;width:13px;height:13px;border:1px solid #767676;border-radius:2.5px;background:#fff"></div>
<div class="tx" style="left:296.3px;top:310.00px;font-size:13px;line-height:20px;color:#333;text-align:center;width:126.09999999999997px;">224</div>
<div class="tx" style="left:422.4px;top:310.00px;font-size:13px;line-height:20px;color:#333;text-align:center;width:84.90000000000003px;">2</div>
<div class="tx" style="left:507.3px;top:310.00px;font-size:13px;line-height:20px;color:#333;text-align:center;width:147.99999999999994px;">20210616271</div>
<div class="tx" style="left:655.3px;top:310.00px;font-size:13px;line-height:20px;color:#111;text-align:center;width:127.80000000000007px;">绿色</div>
<div class="tx" style="left:783.1px;top:310.00px;font-size:13px;line-height:20px;color:#333;text-align:center;width:121.29999999999995px;">10000.000</div>
<div class="tx" style="left:904.4px;top:310.00px;font-size:13px;line-height:20px;color:#333;text-align:center;width:128.19999999999993px;">9600.000</div>
<div class="tx" style="left:1032.6px;top:310.00px;font-size:13px;line-height:20px;color:#333;text-align:center;width:105.80000000000018px;">3</div>
<div class="tx" style="left:1247.5px;top:310.00px;font-size:13px;line-height:20px;color:#333;text-align:center;width:213.0px;">2021-06-16 16:02:01</div>
<div class="tx" style="left:1460.5px;top:310.00px;font-size:13px;line-height:20px;color:#333;text-align:center;width:211.79999999999995px;">2021-06-16 16:03:01</div>
<div class="tx" style="left:1672.3px;top:310.00px;font-size:13px;line-height:20px;color:#333;text-align:center;width:118.0px;">测试会员1</div>
<svg style="position:absolute;left:1166.5px;top:313.7px" width="11" height="11" viewBox="0 0 11 11" fill="#18bc9c" ><circle cx="5.5" cy="5.5" r="5.5"/></svg>
<div class="tx" style="left:1182px;top:310.00px;font-size:13px;line-height:20px;color:#18bc9c;">已结算</div>
<div class="bx" style="left:1816px;top:309px;width:22px;height:22px;background:#18bc9c;border-radius:3px"></div>
<svg style="position:absolute;left:1822px;top:314.2px" width="11" height="11" viewBox="0 0 11 11" fill="#fff" ><path d="M0 11 L0.7 7.6 L8 0.3 L10.7 3 L3.4 10.3 Z"/><path d="M0.9 8.2 L2.8 10.1" stroke="#18bc9c" stroke-width="0.7" fill="none"/></svg>
<div class="bx" style="left:1842px;top:309px;width:22px;height:22px;background:#e74c3c;border-radius:3px"></div>
<svg style="position:absolute;left:1847.5px;top:313.8px" width="11" height="11.5" viewBox="0 0 11 12" fill="#fff" ><path d="M3.6 1.8 Q3.8 0.4 5 0.4 L6 0.4 Q7.2 0.4 7.4 1.8" fill="none" stroke="#fff" stroke-width="1.1"/><rect x="0" y="1.7" width="11" height="1.5"/><path d="M1 3.2 L10 3.2 L9.4 11.4 Q9.3 12 8.6 12 L2.4 12 Q1.7 12 1.6 11.4 Z"/><rect x="3.1" y="4.5" width="0.8" height="6" fill="#e74c3c"/><rect x="5.1" y="4.5" width="0.8" height="6" fill="#e74c3c"/><rect x="7.1" y="4.5" width="0.8" height="6" fill="#e74c3c"/></svg>
<div class="bx" style="left:272px;top:350px;width:13px;height:13px;border:1px solid #767676;border-radius:2.5px;background:#fff"></div>
<div class="tx" style="left:296.3px;top:349.00px;font-size:13px;line-height:20px;color:#333;text-align:center;width:126.09999999999997px;">223</div>
<div class="tx" style="left:422.4px;top:349.00px;font-size:13px;line-height:20px;color:#333;text-align:center;width:84.90000000000003px;">2</div>
<div class="tx" style="left:507.3px;top:349.00px;font-size:13px;line-height:20px;color:#333;text-align:center;width:147.99999999999994px;">20210616271</div>
<div class="tx" style="left:655.3px;top:349.00px;font-size:13px;line-height:20px;color:#39cccc;text-align:center;width:127.80000000000007px;">紫色</div>
<div class="tx" style="left:783.1px;top:349.00px;font-size:13px;line-height:20px;color:#333;text-align:center;width:121.29999999999995px;">10000.000</div>
<div class="tx" style="left:904.4px;top:349.00px;font-size:13px;line-height:20px;color:#333;text-align:center;width:128.19999999999993px;">-10000.000</div>
<div class="tx" style="left:1032.6px;top:349.00px;font-size:13px;line-height:20px;color:#333;text-align:center;width:105.80000000000018px;">3</div>
<div class="tx" style="left:1247.5px;top:349.00px;font-size:13px;line-height:20px;color:#333;text-align:center;width:213.0px;">2021-06-16 16:01:43</div>
<div class="tx" style="left:1460.5px;top:349.00px;font-size:13px;line-height:20px;color:#333;text-align:center;width:211.79999999999995px;">2021-06-16 16:03:01</div>
<div class="tx" style="left:1672.3px;top:349.00px;font-size:13px;line-height:20px;color:#333;text-align:center;width:118.0px;">测试会员1</div>
<svg style="position:absolute;left:1166.5px;top:352.7px" width="11" height="11" viewBox="0 0 11 11" fill="#18bc9c" ><circle cx="5.5" cy="5.5" r="5.5"/></svg>
<div class="tx" style="left:1182px;top:349.00px;font-size:13px;line-height:20px;color:#18bc9c;">已结算</div>
<div class="bx" style="left:1816px;top:348px;width:22px;height:22px;background:#18bc9c;border-radius:3px"></div>
<svg style="position:absolute;left:1822px;top:353.2px" width="11" height="11" viewBox="0 0 11 11" fill="#fff" ><path d="M0 11 L0.7 7.6 L8 0.3 L10.7 3 L3.4 10.3 Z"/><path d="M0.9 8.2 L2.8 10.1" stroke="#18bc9c" stroke-width="0.7" fill="none"/></svg>
<div class="bx" style="left:1842px;top:348px;width:22px;height:22px;background:#e74c3c;border-radius:3px"></div>
<svg style="position:absolute;left:1847.5px;top:352.8px" width="11" height="11.5" viewBox="0 0 11 12" fill="#fff" ><path d="M3.6 1.8 Q3.8 0.4 5 0.4 L6 0.4 Q7.2 0.4 7.4 1.8" fill="none" stroke="#fff" stroke-width="1.1"/><rect x="0" y="1.7" width="11" height="1.5"/><path d="M1 3.2 L10 3.2 L9.4 11.4 Q9.3 12 8.6 12 L2.4 12 Q1.7 12 1.6 11.4 Z"/><rect x="3.1" y="4.5" width="0.8" height="6" fill="#e74c3c"/><rect x="5.1" y="4.5" width="0.8" height="6" fill="#e74c3c"/><rect x="7.1" y="4.5" width="0.8" height="6" fill="#e74c3c"/></svg>
<div class="bx" style="left:272px;top:389px;width:13px;height:13px;border:1px solid #767676;border-radius:2.5px;background:#fff"></div>
<div class="tx" style="left:296.3px;top:388.00px;font-size:13px;line-height:20px;color:#333;text-align:center;width:126.09999999999997px;">222</div>
<div class="tx" style="left:422.4px;top:388.00px;font-size:13px;line-height:20px;color:#333;text-align:center;width:84.90000000000003px;">2</div>
<div class="tx" style="left:507.3px;top:388.00px;font-size:13px;line-height:20px;color:#333;text-align:center;width:147.99999999999994px;">20210616256</div>
<div class="tx" style="left:655.3px;top:388.00px;font-size:13px;line-height:20px;color:#111;text-align:center;width:127.80000000000007px;">绿色</div>
<div class="tx" style="left:783.1px;top:388.00px;font-size:13px;line-height:20px;color:#333;text-align:center;width:121.29999999999995px;">10.000</div>
<div class="tx" style="left:904.4px;top:388.00px;font-size:13px;line-height:20px;color:#333;text-align:center;width:128.19999999999993px;">-10.000</div>
<div class="tx" style="left:1032.6px;top:388.00px;font-size:13px;line-height:20px;color:#333;text-align:center;width:105.80000000000018px;">2</div>
<div class="tx" style="left:1247.5px;top:388.00px;font-size:13px;line-height:20px;color:#333;text-align:center;width:213.0px;">2021-06-16 15:16:23</div>
<div class="tx" style="left:1460.5px;top:388.00px;font-size:13px;line-height:20px;color:#333;text-align:center;width:211.79999999999995px;">2021-06-16 15:18:01</div>
<div class="tx" style="left:1672.3px;top:388.00px;font-size:13px;line-height:20px;color:#333;text-align:center;width:118.0px;">测试会员1</div>
<svg style="position:absolute;left:1166.5px;top:391.7px" width="11" height="11" viewBox="0 0 11 11" fill="#18bc9c" ><circle cx="5.5" cy="5.5" r="5.5"/></svg>
<div class="tx" style="left:1182px;top:388.00px;font-size:13px;line-height:20px;color:#18bc9c;">已结算</div>
<div class="bx" style="left:1816px;top:387px;width:22px;height:22px;background:#18bc9c;border-radius:3px"></div>
<svg style="position:absolute;left:1822px;top:392.2px" width="11" height="11" viewBox="0 0 11 11" fill="#fff" ><path d="M0 11 L0.7 7.6 L8 0.3 L10.7 3 L3.4 10.3 Z"/><path d="M0.9 8.2 L2.8 10.1" stroke="#18bc9c" stroke-width="0.7" fill="none"/></svg>
<div class="bx" style="left:1842px;top:387px;width:22px;height:22px;background:#e74c3c;border-radius:3px"></div>
<svg style="position:absolute;left:1847.5px;top:391.8px" width="11" height="11.5" viewBox="0 0 11 12" fill="#fff" ><path d="M3.6 1.8 Q3.8 0.4 5 0.4 L6 0.4 Q7.2 0.4 7.4 1.8" fill="none" stroke="#fff" stroke-width="1.1"/><rect x="0" y="1.7" width="11" height="1.5"/><path d="M1 3.2 L10 3.2 L9.4 11.4 Q9.3 12 8.6 12 L2.4 12 Q1.7 12 1.6 11.4 Z"/><rect x="3.1" y="4.5" width="0.8" height="6" fill="#e74c3c"/><rect x="5.1" y="4.5" width="0.8" height="6" fill="#e74c3c"/><rect x="7.1" y="4.5" width="0.8" height="6" fill="#e74c3c"/></svg>
<div class="bx" style="left:272px;top:428px;width:13px;height:13px;border:1px solid #767676;border-radius:2.5px;background:#fff"></div>
<div class="tx" style="left:296.3px;top:427.00px;font-size:13px;line-height:20px;color:#333;text-align:center;width:126.09999999999997px;">221</div>
<div class="tx" style="left:422.4px;top:427.00px;font-size:13px;line-height:20px;color:#333;text-align:center;width:84.90000000000003px;">2</div>
<div class="tx" style="left:507.3px;top:427.00px;font-size:13px;line-height:20px;color:#333;text-align:center;width:147.99999999999994px;">20210616239</div>
<div class="tx" style="left:655.3px;top:427.00px;font-size:13px;line-height:20px;color:#111;text-align:center;width:127.80000000000007px;">绿色</div>
<div class="tx" style="left:783.1px;top:427.00px;font-size:13px;line-height:20px;color:#333;text-align:center;width:121.29999999999995px;">500.000</div>
<div class="tx" style="left:904.4px;top:427.00px;font-size:13px;line-height:20px;color:#333;text-align:center;width:128.19999999999993px;">-500.000</div>
<div class="tx" style="left:1032.6px;top:427.00px;font-size:13px;line-height:20px;color:#333;text-align:center;width:105.80000000000018px;">6</div>
<div class="tx" style="left:1247.5px;top:427.00px;font-size:13px;line-height:20px;color:#333;text-align:center;width:213.0px;">2021-06-16 14:25:45</div>
<div class="tx" style="left:1460.5px;top:427.00px;font-size:13px;line-height:20px;color:#333;text-align:center;width:211.79999999999995px;">2021-06-16 14:27:01</div>
<div class="tx" style="left:1672.3px;top:427.00px;font-size:13px;line-height:20px;color:#333;text-align:center;width:118.0px;">测试会员1</div>
<svg style="position:absolute;left:1166.5px;top:430.7px" width="11" height="11" viewBox="0 0 11 11" fill="#18bc9c" ><circle cx="5.5" cy="5.5" r="5.5"/></svg>
<div class="tx" style="left:1182px;top:427.00px;font-size:13px;line-height:20px;color:#18bc9c;">已结算</div>
<div class="bx" style="left:1816px;top:426px;width:22px;height:22px;background:#18bc9c;border-radius:3px"></div>
<svg style="position:absolute;left:1822px;top:431.2px" width="11" height="11" viewBox="0 0 11 11" fill="#fff" ><path d="M0 11 L0.7 7.6 L8 0.3 L10.7 3 L3.4 10.3 Z"/><path d="M0.9 8.2 L2.8 10.1" stroke="#18bc9c" stroke-width="0.7" fill="none"/></svg>
<div class="bx" style="left:1842px;top:426px;width:22px;height:22px;background:#e74c3c;border-radius:3px"></div>
<svg style="position:absolute;left:1847.5px;top:430.8px" width="11" height="11.5" viewBox="0 0 11 12" fill="#fff" ><path d="M3.6 1.8 Q3.8 0.4 5 0.4 L6 0.4 Q7.2 0.4 7.4 1.8" fill="none" stroke="#fff" stroke-width="1.1"/><rect x="0" y="1.7" width="11" height="1.5"/><path d="M1 3.2 L10 3.2 L9.4 11.4 Q9.3 12 8.6 12 L2.4 12 Q1.7 12 1.6 11.4 Z"/><rect x="3.1" y="4.5" width="0.8" height="6" fill="#e74c3c"/><rect x="5.1" y="4.5" width="0.8" height="6" fill="#e74c3c"/><rect x="7.1" y="4.5" width="0.8" height="6" fill="#e74c3c"/></svg>
<div class="bx" style="left:272px;top:467px;width:13px;height:13px;border:1px solid #767676;border-radius:2.5px;background:#fff"></div>
<div class="tx" style="left:296.3px;top:466.00px;font-size:13px;line-height:20px;color:#333;text-align:center;width:126.09999999999997px;">220</div>
<div class="tx" style="left:422.4px;top:466.00px;font-size:13px;line-height:20px;color:#333;text-align:center;width:84.90000000000003px;">2</div>
<div class="tx" style="left:507.3px;top:466.00px;font-size:13px;line-height:20px;color:#333;text-align:center;width:147.99999999999994px;">20210616239</div>
<div class="tx" style="left:655.3px;top:466.00px;font-size:13px;line-height:20px;color:#39cccc;text-align:center;width:127.80000000000007px;">紫色</div>
<div class="tx" style="left:783.1px;top:466.00px;font-size:13px;line-height:20px;color:#333;text-align:center;width:121.29999999999995px;">500.000</div>
<div class="tx" style="left:904.4px;top:466.00px;font-size:13px;line-height:20px;color:#333;text-align:center;width:128.19999999999993px;">-500.000</div>
<div class="tx" style="left:1032.6px;top:466.00px;font-size:13px;line-height:20px;color:#333;text-align:center;width:105.80000000000018px;">6</div>
<div class="tx" style="left:1247.5px;top:466.00px;font-size:13px;line-height:20px;color:#333;text-align:center;width:213.0px;">2021-06-16 14:25:21</div>
<div class="tx" style="left:1460.5px;top:466.00px;font-size:13px;line-height:20px;color:#333;text-align:center;width:211.79999999999995px;">2021-06-16 14:27:01</div>
<div class="tx" style="left:1672.3px;top:466.00px;font-size:13px;line-height:20px;color:#333;text-align:center;width:118.0px;">测试会员1</div>
<svg style="position:absolute;left:1166.5px;top:469.7px" width="11" height="11" viewBox="0 0 11 11" fill="#18bc9c" ><circle cx="5.5" cy="5.5" r="5.5"/></svg>
<div class="tx" style="left:1182px;top:466.00px;font-size:13px;line-height:20px;color:#18bc9c;">已结算</div>
<div class="bx" style="left:1816px;top:465px;width:22px;height:22px;background:#18bc9c;border-radius:3px"></div>
<svg style="position:absolute;left:1822px;top:470.2px" width="11" height="11" viewBox="0 0 11 11" fill="#fff" ><path d="M0 11 L0.7 7.6 L8 0.3 L10.7 3 L3.4 10.3 Z"/><path d="M0.9 8.2 L2.8 10.1" stroke="#18bc9c" stroke-width="0.7" fill="none"/></svg>
<div class="bx" style="left:1842px;top:465px;width:22px;height:22px;background:#e74c3c;border-radius:3px"></div>
<svg style="position:absolute;left:1847.5px;top:469.8px" width="11" height="11.5" viewBox="0 0 11 12" fill="#fff" ><path d="M3.6 1.8 Q3.8 0.4 5 0.4 L6 0.4 Q7.2 0.4 7.4 1.8" fill="none" stroke="#fff" stroke-width="1.1"/><rect x="0" y="1.7" width="11" height="1.5"/><path d="M1 3.2 L10 3.2 L9.4 11.4 Q9.3 12 8.6 12 L2.4 12 Q1.7 12 1.6 11.4 Z"/><rect x="3.1" y="4.5" width="0.8" height="6" fill="#e74c3c"/><rect x="5.1" y="4.5" width="0.8" height="6" fill="#e74c3c"/><rect x="7.1" y="4.5" width="0.8" height="6" fill="#e74c3c"/></svg>
<div class="bx" style="left:272px;top:506px;width:13px;height:13px;border:1px solid #767676;border-radius:2.5px;background:#fff"></div>
<div class="tx" style="left:296.3px;top:505.00px;font-size:13px;line-height:20px;color:#333;text-align:center;width:126.09999999999997px;">219</div>
<div class="tx" style="left:422.4px;top:505.00px;font-size:13px;line-height:20px;color:#333;text-align:center;width:84.90000000000003px;">2</div>
<div class="tx" style="left:507.3px;top:505.00px;font-size:13px;line-height:20px;color:#333;text-align:center;width:147.99999999999994px;">20210616188</div>
<div class="tx" style="left:655.3px;top:505.00px;font-size:13px;line-height:20px;color:#111;text-align:center;width:127.80000000000007px;">绿色</div>
<div class="tx" style="left:783.1px;top:505.00px;font-size:13px;line-height:20px;color:#333;text-align:center;width:121.29999999999995px;">300.000</div>
<div class="tx" style="left:904.4px;top:505.00px;font-size:13px;line-height:20px;color:#333;text-align:center;width:128.19999999999993px;">-300.000</div>
<div class="tx" style="left:1032.6px;top:505.00px;font-size:13px;line-height:20px;color:#333;text-align:center;width:105.80000000000018px;">2</div>
<div class="tx" style="left:1247.5px;top:505.00px;font-size:13px;line-height:20px;color:#333;text-align:center;width:213.0px;">2021-06-16 11:52:12</div>
<div class="tx" style="left:1460.5px;top:505.00px;font-size:13px;line-height:20px;color:#333;text-align:center;width:211.79999999999995px;">2021-06-16 11:54:01</div>
<div class="tx" style="left:1672.3px;top:505.00px;font-size:13px;line-height:20px;color:#333;text-align:center;width:118.0px;">测试会员1</div>
<svg style="position:absolute;left:1166.5px;top:508.7px" width="11" height="11" viewBox="0 0 11 11" fill="#18bc9c" ><circle cx="5.5" cy="5.5" r="5.5"/></svg>
<div class="tx" style="left:1182px;top:505.00px;font-size:13px;line-height:20px;color:#18bc9c;">已结算</div>
<div class="bx" style="left:1816px;top:504px;width:22px;height:22px;background:#18bc9c;border-radius:3px"></div>
<svg style="position:absolute;left:1822px;top:509.2px" width="11" height="11" viewBox="0 0 11 11" fill="#fff" ><path d="M0 11 L0.7 7.6 L8 0.3 L10.7 3 L3.4 10.3 Z"/><path d="M0.9 8.2 L2.8 10.1" stroke="#18bc9c" stroke-width="0.7" fill="none"/></svg>
<div class="bx" style="left:1842px;top:504px;width:22px;height:22px;background:#e74c3c;border-radius:3px"></div>
<svg style="position:absolute;left:1847.5px;top:508.8px" width="11" height="11.5" viewBox="0 0 11 12" fill="#fff" ><path d="M3.6 1.8 Q3.8 0.4 5 0.4 L6 0.4 Q7.2 0.4 7.4 1.8" fill="none" stroke="#fff" stroke-width="1.1"/><rect x="0" y="1.7" width="11" height="1.5"/><path d="M1 3.2 L10 3.2 L9.4 11.4 Q9.3 12 8.6 12 L2.4 12 Q1.7 12 1.6 11.4 Z"/><rect x="3.1" y="4.5" width="0.8" height="6" fill="#e74c3c"/><rect x="5.1" y="4.5" width="0.8" height="6" fill="#e74c3c"/><rect x="7.1" y="4.5" width="0.8" height="6" fill="#e74c3c"/></svg>
<div class="bx" style="left:272px;top:545px;width:13px;height:13px;border:1px solid #767676;border-radius:2.5px;background:#fff"></div>
<div class="tx" style="left:296.3px;top:544.00px;font-size:13px;line-height:20px;color:#333;text-align:center;width:126.09999999999997px;">218</div>
<div class="tx" style="left:422.4px;top:544.00px;font-size:13px;line-height:20px;color:#333;text-align:center;width:84.90000000000003px;">2</div>
<div class="tx" style="left:507.3px;top:544.00px;font-size:13px;line-height:20px;color:#333;text-align:center;width:147.99999999999994px;">20210616188</div>
<div class="tx" style="left:655.3px;top:544.00px;font-size:13px;line-height:20px;color:#111;text-align:center;width:127.80000000000007px;">绿色</div>
<div class="tx" style="left:783.1px;top:544.00px;font-size:13px;line-height:20px;color:#333;text-align:center;width:121.29999999999995px;">10.000</div>
<div class="tx" style="left:904.4px;top:544.00px;font-size:13px;line-height:20px;color:#333;text-align:center;width:128.19999999999993px;">-10.000</div>
<div class="tx" style="left:1032.6px;top:544.00px;font-size:13px;line-height:20px;color:#333;text-align:center;width:105.80000000000018px;">2</div>
<div class="tx" style="left:1247.5px;top:544.00px;font-size:13px;line-height:20px;color:#333;text-align:center;width:213.0px;">2021-06-16 11:51:58</div>
<div class="tx" style="left:1460.5px;top:544.00px;font-size:13px;line-height:20px;color:#333;text-align:center;width:211.79999999999995px;">2021-06-16 11:54:01</div>
<div class="tx" style="left:1672.3px;top:544.00px;font-size:13px;line-height:20px;color:#333;text-align:center;width:118.0px;">测试会员1</div>
<svg style="position:absolute;left:1166.5px;top:547.7px" width="11" height="11" viewBox="0 0 11 11" fill="#18bc9c" ><circle cx="5.5" cy="5.5" r="5.5"/></svg>
<div class="tx" style="left:1182px;top:544.00px;font-size:13px;line-height:20px;color:#18bc9c;">已结算</div>
<div class="bx" style="left:1816px;top:543px;width:22px;height:22px;background:#18bc9c;border-radius:3px"></div>
<svg style="position:absolute;left:1822px;top:548.2px" width="11" height="11" viewBox="0 0 11 11" fill="#fff" ><path d="M0 11 L0.7 7.6 L8 0.3 L10.7 3 L3.4 10.3 Z"/><path d="M0.9 8.2 L2.8 10.1" stroke="#18bc9c" stroke-width="0.7" fill="none"/></svg>
<div class="bx" style="left:1842px;top:543px;width:22px;height:22px;background:#e74c3c;border-radius:3px"></div>
<svg style="position:absolute;left:1847.5px;top:547.8px" width="11" height="11.5" viewBox="0 0 11 12" fill="#fff" ><path d="M3.6 1.8 Q3.8 0.4 5 0.4 L6 0.4 Q7.2 0.4 7.4 1.8" fill="none" stroke="#fff" stroke-width="1.1"/><rect x="0" y="1.7" width="11" height="1.5"/><path d="M1 3.2 L10 3.2 L9.4 11.4 Q9.3 12 8.6 12 L2.4 12 Q1.7 12 1.6 11.4 Z"/><rect x="3.1" y="4.5" width="0.8" height="6" fill="#e74c3c"/><rect x="5.1" y="4.5" width="0.8" height="6" fill="#e74c3c"/><rect x="7.1" y="4.5" width="0.8" height="6" fill="#e74c3c"/></svg>
<div class="bx" style="left:272px;top:584px;width:13px;height:13px;border:1px solid #767676;border-radius:2.5px;background:#fff"></div>
<div class="tx" style="left:296.3px;top:583.00px;font-size:13px;line-height:20px;color:#333;text-align:center;width:126.09999999999997px;">217</div>
<div class="tx" style="left:422.4px;top:583.00px;font-size:13px;line-height:20px;color:#333;text-align:center;width:84.90000000000003px;">2</div>
<div class="tx" style="left:507.3px;top:583.00px;font-size:13px;line-height:20px;color:#333;text-align:center;width:147.99999999999994px;">20210615459</div>
<div class="tx" style="left:655.3px;top:583.00px;font-size:13px;line-height:20px;color:#333;text-align:center;width:127.80000000000007px;">Bet_code 0</div>
<div class="tx" style="left:783.1px;top:583.00px;font-size:13px;line-height:20px;color:#333;text-align:center;width:121.29999999999995px;">1000.000</div>
<div class="tx" style="left:904.4px;top:583.00px;font-size:13px;line-height:20px;color:#333;text-align:center;width:128.19999999999993px;">-1000.000</div>
<div class="tx" style="left:1032.6px;top:583.00px;font-size:13px;line-height:20px;color:#333;text-align:center;width:105.80000000000018px;">2</div>
<div class="tx" style="left:1247.5px;top:583.00px;font-size:13px;line-height:20px;color:#333;text-align:center;width:213.0px;">2021-06-16 01:25:57</div>
<div class="tx" style="left:1460.5px;top:583.00px;font-size:13px;line-height:20px;color:#333;text-align:center;width:211.79999999999995px;">2021-06-16 01:27:01</div>
<div class="tx" style="left:1672.3px;top:583.00px;font-size:13px;line-height:20px;color:#333;text-align:center;width:118.0px;">测试会员1</div>
<svg style="position:absolute;left:1166.5px;top:586.7px" width="11" height="11" viewBox="0 0 11 11" fill="#18bc9c" ><circle cx="5.5" cy="5.5" r="5.5"/></svg>
<div class="tx" style="left:1182px;top:583.00px;font-size:13px;line-height:20px;color:#18bc9c;">已结算</div>
<div class="bx" style="left:1816px;top:582px;width:22px;height:22px;background:#18bc9c;border-radius:3px"></div>
<svg style="position:absolute;left:1822px;top:587.2px" width="11" height="11" viewBox="0 0 11 11" fill="#fff" ><path d="M0 11 L0.7 7.6 L8 0.3 L10.7 3 L3.4 10.3 Z"/><path d="M0.9 8.2 L2.8 10.1" stroke="#18bc9c" stroke-width="0.7" fill="none"/></svg>
<div class="bx" style="left:1842px;top:582px;width:22px;height:22px;background:#e74c3c;border-radius:3px"></div>
<svg style="position:absolute;left:1847.5px;top:586.8px" width="11" height="11.5" viewBox="0 0 11 12" fill="#fff" ><path d="M3.6 1.8 Q3.8 0.4 5 0.4 L6 0.4 Q7.2 0.4 7.4 1.8" fill="none" stroke="#fff" stroke-width="1.1"/><rect x="0" y="1.7" width="11" height="1.5"/><path d="M1 3.2 L10 3.2 L9.4 11.4 Q9.3 12 8.6 12 L2.4 12 Q1.7 12 1.6 11.4 Z"/><rect x="3.1" y="4.5" width="0.8" height="6" fill="#e74c3c"/><rect x="5.1" y="4.5" width="0.8" height="6" fill="#e74c3c"/><rect x="7.1" y="4.5" width="0.8" height="6" fill="#e74c3c"/></svg>
<div class="bx" style="left:272px;top:623px;width:13px;height:13px;border:1px solid #767676;border-radius:2.5px;background:#fff"></div>
<div class="tx" style="left:296.3px;top:622.00px;font-size:13px;line-height:20px;color:#333;text-align:center;width:126.09999999999997px;">216</div>
<div class="tx" style="left:422.4px;top:622.00px;font-size:13px;line-height:20px;color:#333;text-align:center;width:84.90000000000003px;">2</div>
<div class="tx" style="left:507.3px;top:622.00px;font-size:13px;line-height:20px;color:#333;text-align:center;width:147.99999999999994px;">20210615429</div>
<div class="tx" style="left:655.3px;top:622.00px;font-size:13px;line-height:20px;color:#39cccc;text-align:center;width:127.80000000000007px;">紫色</div>
<div class="tx" style="left:783.1px;top:622.00px;font-size:13px;line-height:20px;color:#333;text-align:center;width:121.29999999999995px;">300.000</div>
<div class="tx" style="left:904.4px;top:622.00px;font-size:13px;line-height:20px;color:#333;text-align:center;width:128.19999999999993px;">-300.000</div>
<div class="tx" style="left:1032.6px;top:622.00px;font-size:13px;line-height:20px;color:#333;text-align:center;width:105.80000000000018px;">9</div>
<div class="tx" style="left:1247.5px;top:622.00px;font-size:13px;line-height:20px;color:#333;text-align:center;width:213.0px;">2021-06-15 23:54:21</div>
<div class="tx" style="left:1460.5px;top:622.00px;font-size:13px;line-height:20px;color:#333;text-align:center;width:211.79999999999995px;">2021-06-15 23:57:01</div>
<div class="tx" style="left:1672.3px;top:622.00px;font-size:13px;line-height:20px;color:#333;text-align:center;width:118.0px;">测试会员1</div>
<svg style="position:absolute;left:1166.5px;top:625.7px" width="11" height="11" viewBox="0 0 11 11" fill="#18bc9c" ><circle cx="5.5" cy="5.5" r="5.5"/></svg>
<div class="tx" style="left:1182px;top:622.00px;font-size:13px;line-height:20px;color:#18bc9c;">已结算</div>
<div class="bx" style="left:1816px;top:621px;width:22px;height:22px;background:#18bc9c;border-radius:3px"></div>
<svg style="position:absolute;left:1822px;top:626.2px" width="11" height="11" viewBox="0 0 11 11" fill="#fff" ><path d="M0 11 L0.7 7.6 L8 0.3 L10.7 3 L3.4 10.3 Z"/><path d="M0.9 8.2 L2.8 10.1" stroke="#18bc9c" stroke-width="0.7" fill="none"/></svg>
<div class="bx" style="left:1842px;top:621px;width:22px;height:22px;background:#e74c3c;border-radius:3px"></div>
<svg style="position:absolute;left:1847.5px;top:625.8px" width="11" height="11.5" viewBox="0 0 11 12" fill="#fff" ><path d="M3.6 1.8 Q3.8 0.4 5 0.4 L6 0.4 Q7.2 0.4 7.4 1.8" fill="none" stroke="#fff" stroke-width="1.1"/><rect x="0" y="1.7" width="11" height="1.5"/><path d="M1 3.2 L10 3.2 L9.4 11.4 Q9.3 12 8.6 12 L2.4 12 Q1.7 12 1.6 11.4 Z"/><rect x="3.1" y="4.5" width="0.8" height="6" fill="#e74c3c"/><rect x="5.1" y="4.5" width="0.8" height="6" fill="#e74c3c"/><rect x="7.1" y="4.5" width="0.8" height="6" fill="#e74c3c"/></svg>
<div class="tx" style="left:260px;top:668.50px;font-size:13px;line-height:20px;color:#333;">显示第 1 到第 10 条记录，总共 225 条记录 每页显示</div>
<div class="bx" style="left:568px;top:664px;width:49px;height:31px;background:#f4f4f4;border:1px solid #ddd;border-radius:3px"></div>
<div class="tx" style="left:581px;top:670.00px;font-size:12px;line-height:20px;color:#333;">10</div>
<svg style="position:absolute;left:597px;top:677px" width="8" height="4" viewBox="0 0 8 4" fill="#333" ><path d="M0 4 L8 4 L4 0 Z"/></svg>
<div class="tx" style="left:622px;top:668.50px;font-size:13px;line-height:20px;color:#333;">条记录</div>
<div class="bx" style="left:1415px;top:662px;width:365px;height:32.5px;background:#fafafa;border:1px solid #ddd;border-radius:3px"></div>
<div class="tx" style="left:1415.2px;top:667.80px;font-size:13px;line-height:20px;color:#555;text-align:center;width:63.799999999999955px;">上一页</div>
<div class="bx" style="left:1479px;top:662px;width:32.59999999999991px;height:32.5px;background:#2c3e50"></div>
<div class="tx" style="left:1479px;top:667.80px;font-size:13px;line-height:20px;color:#fff;text-align:center;width:32.59999999999991px;">1</div>
<div class="tx" style="left:1511.6px;top:667.80px;font-size:13px;line-height:20px;color:#555;text-align:center;width:31.800000000000182px;">2</div>
<div class="bx" style="left:1542.9px;top:662px;width:1px;height:32.5px;background:#ddd"></div>
<div class="tx" style="left:1543.4px;top:667.80px;font-size:13px;line-height:20px;color:#555;text-align:center;width:32.0px;">3</div>
<div class="bx" style="left:1574.9px;top:662px;width:1px;height:32.5px;background:#ddd"></div>
<div class="tx" style="left:1575.4px;top:667.80px;font-size:13px;line-height:20px;color:#555;text-align:center;width:32.09999999999991px;">4</div>
<div class="bx" style="left:1607.0px;top:662px;width:1px;height:32.5px;background:#ddd"></div>
<div class="tx" style="left:1607.5px;top:667.80px;font-size:13px;line-height:20px;color:#555;text-align:center;width:32.799999999999955px;">5</div>
<div class="bx" style="left:1640.3px;top:663px;width:36.100000000000136px;height:30.5px;background:#fff"></div>
<div class="bx" style="left:1639.8px;top:662px;width:1px;height:32.5px;background:#ddd"></div>
<div class="tx" style="left:1640.3px;top:667.80px;font-size:13px;line-height:20px;color:#555;text-align:center;width:36.100000000000136px;">...</div>
<div class="bx" style="left:1675.9px;top:662px;width:1px;height:32.5px;background:#ddd"></div>
<div class="tx" style="left:1676.4px;top:667.80px;font-size:13px;line-height:20px;color:#555;text-align:center;width:39.19999999999982px;">23</div>
<div class="bx" style="left:1715.1px;top:662px;width:1px;height:32.5px;background:#ddd"></div>
<div class="tx" style="left:1715.6px;top:667.80px;font-size:13px;line-height:20px;color:#555;text-align:center;width:64.10000000000014px;">下一页</div>
<div class="bx" style="left:1785px;top:662px;width:50px;height:31px;background:#fff;border:1px solid #ddd"></div>
<div class="bx" style="left:1840.5px;top:663px;width:49px;height:30.5px;background:#f4f4f4;border:1px solid #ddd;border-radius:3px"></div>
<div class="tx" style="left:1840.5px;top:667.50px;font-size:12px;line-height:20px;color:#333;text-align:center;width:49px;">跳转</div>
</body></html>
